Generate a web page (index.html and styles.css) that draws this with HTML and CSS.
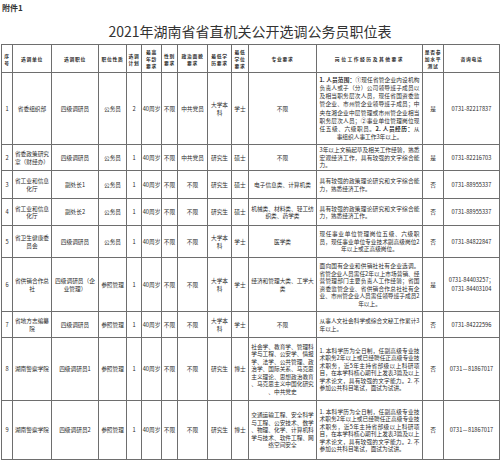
FILE: index.html
```html
<!DOCTYPE html>
<html lang="zh-CN">
<head>
<meta charset="utf-8">
<title>2021年湖南省省直机关公开选调公务员职位表</title>
<link rel="stylesheet" href="styles.css">
</head>
<body>
<div class="page">
  <div class="annex">附件1</div>
  <h1 class="title">2021年湖南省省直机关公开选调公务员职位表</h1>
  <div class="grid">
    <div class="hd">序<br>号</div>
    <div class="hd">选调单位</div>
    <div class="hd">选调职位</div>
    <div class="hd">职位性质</div>
    <div class="hd">选调<br>计划</div>
    <div class="hd">最高<br>年龄<br>要求</div>
    <div class="hd">性别<br>要求</div>
    <div class="hd">政治面貌<br>要求</div>
    <div class="hd">最低学<br>历要求</div>
    <div class="hd">最低<br>学位<br>要求</div>
    <div class="hd">专业要求</div>
    <div class="hd wide">岗位工作经历及其他要求</div>
    <div class="hd">是否参<br>加水平<br>测试</div>
    <div class="hd">咨询电话</div>

    <div>1</div><div>省委组织部</div><div>四级调研员</div><div>公务员</div><div>2</div><div class="nw">40周岁</div><div>不限</div><div>中共党员</div><div>大学本科</div><div>学士</div><div class="major">不限</div>
    <div class="req lines">
      <span class="ln"><b>1. 人员范围：</b>①现任省管企业内设机构</span>
      <span class="ln">负责人或子（分）公司领导班子成员以</span>
      <span class="ln">及相当职务层次人员，现任省国资委监</span>
      <span class="ln">管企业、市州管企业领导班子成员；中</span>
      <span class="ln">央在湘企业中层管理或市州管企业相当</span>
      <span class="ln">职务层次人员；②事业单位管理岗位现</span>
      <span class="ln">任五级、六级职员。<b>2. 人员经历：</b>从</span>
      <span class="ln last">事组织人事工作3年以上。</span>
    </div>
    <div>是</div><div>0731-82217837</div>

    <div>2</div><div>省委政策研究室（财经办）</div><div>四级调研员</div><div>公务员</div><div>1</div><div class="nw">40周岁</div><div>不限</div><div>中共党员</div><div>研究生</div><div>硕士</div><div class="major">不限</div>
    <div class="req"><p class="txt">3年以上文稿起草及相关工作经验，熟悉宏观经济工作，具有较强的文字综合能力。</p></div>
    <div>是</div><div>0731-82216703</div>

    <div>3</div><div>省工业和信息化厅</div><div>副处长1</div><div>公务员</div><div>1</div><div class="nw">40周岁</div><div>不限</div><div>不限</div><div>研究生</div><div>硕士</div><div class="major">电子信息类、计算机类</div>
    <div class="req"><p class="txt">具有较强的政策理论研究和文字综合能力，熟悉经济工作。</p></div>
    <div>否</div><div>0731-88955337</div>

    <div>4</div><div>省工业和信息化厅</div><div>副处长2</div><div>公务员</div><div>1</div><div class="nw">40周岁</div><div>不限</div><div>不限</div><div>研究生</div><div>硕士</div><div class="major">机械类、材料类、轻工纺织类、药学类</div>
    <div class="req"><p class="txt">具有较强的政策理论研究和文字综合能力，熟悉经济工作。</p></div>
    <div>否</div><div>0731-88955337</div>

    <div>5</div><div>省卫生健康委员会</div><div>四级调研员</div><div>公务员</div><div>1</div><div class="nw">40周岁</div><div>不限</div><div>不限</div><div>大学本科</div><div>学士</div><div class="major">医学类</div>
    <div class="req lc"><p class="txt">现任事业单位管理岗位五级、六级职员，现任事业单位专业技术副高级岗位2年以上或正高级岗位。</p></div>
    <div>否</div><div>0731-84822847</div>

    <div>6</div><div>省供销合作总社</div><div>四级调研员（企业管理）</div><div>参照管理</div><div>1</div><div class="nw">40周岁</div><div>不限</div><div>不限</div><div>大学本科</div><div>学士</div><div class="major">经济和管理大类、工学大类</div>
    <div class="req lc"><p class="txt">面向国有企业和供销社社有企业选调。省管企业人员需任2年以上市场营销、经营管理部门主要负责人工作经验；省国资委监管企业、省供销合作总社社有企业、市州管企业人员需任领导班子成员2年以上。</p></div>
    <div>是</div><div class="loose"><p class="txt">0731-84403257；<br>0731-84403104</p></div>

    <div>7</div><div>省地方志编纂院</div><div>四级调研员</div><div>参照管理</div><div>1</div><div class="nw">40周岁</div><div>不限</div><div>不限</div><div>大学本科</div><div>学士</div><div class="major">不限</div>
    <div class="req"><p class="txt">从事人文社会科学或综合文秘工作累计3年以上。</p></div>
    <div>否</div><div>0731-84222596</div>

    <div>8</div><div>湖南警察学院</div><div>四级调研员1</div><div>参照管理</div><div>1</div><div class="nw">40周岁</div><div>不限</div><div>不限</div><div>研究生</div><div>博士</div><div class="major any">社会学、教育学、管理科学与工程、公安学、情报学、法学、公共管理、政治学、国际关系、马克思主义理论、思想政治教育、马克思主义中国化研究、中共党史</div>
    <div class="req"><p class="txt">1. 本科学历为全日制，任副高级专业技术职务2年以上或已经聘任正高级专业技术职务，近5年主持省部级以上科研项目，在本学科核心期刊上发表3篇及以上学术论文，具有较强的文字能力。2. 不参加公共科目笔试，面试为试讲。</p></div>
    <div>否</div><div>0731－81867017</div>

    <div>9</div><div>湖南警察学院</div><div>四级调研员2</div><div>参照管理</div><div>1</div><div class="nw">40周岁</div><div>不限</div><div>不限</div><div>研究生</div><div>博士</div><div class="major any">交通运输工程、安全科学与工程、公安技术、数学、物理、化学、计算机科学与技术、软件工程、网络空间安全</div>
    <div class="req"><p class="txt">1. 本科学历为全日制，任副高级专业技术职务2年以上或已经聘任正高级专业技术职务，近5年主持省部级以上科研项目，在本学科核心期刊上发表3篇及以上学术论文，具有较强的文字能力。2. 不参加公共科目笔试，面试为试讲。</p></div>
    <div>否</div><div>0731－81867017</div>
  </div>
</div>
</body>
</html>
```
FILE: styles.css
```css
* { box-sizing: border-box; }
html, body { margin: 0; padding: 0; background: #fff; }
body {
  font-family: "Noto Sans CJK SC", "Noto Sans", sans-serif;
  color: #2b2b2b;
}
.page { width: 500px; height: 460px; overflow: hidden; }
.annex {
  height: 14px;
  padding: 3px 0 0 2px;
  font-size: 8px;
  line-height: 10px;
  font-weight: bold;
  color: #333;
}
.title {
  margin: 0;
  height: 30px;
  padding-top: 7px;
  text-align: center;
  font-size: 14px;
  line-height: 20px;
  font-weight: normal;
  color: #333;
}
.grid {
  display: grid;
  margin-left: 1px;
  width: 499px;
  padding: 1px;
  gap: 1px;
  background: #6e6e6e;
  grid-template-columns: 10px 38px 46px 27px 14px 19px 15px 29px 23px 16px 67px 105px 20px 55px;
  grid-template-rows: 27px 71px 25px 27px 26px 31px 53px 25px 62px 58px;
}
.grid > div {
  background: #fff;
  display: flex;
  flex-direction: column;
  justify-content: center;
  text-align: center;
  font-size: 5.7px;
  line-height: 7.5px;
  padding: 0 0.5px;
  overflow: hidden;
}
.txt { margin: 0; }
.grid > .hd {
  font-size: 4.8px;
  line-height: 7px;
  font-weight: bold;
  letter-spacing: 0.7px;
  white-space: nowrap;
}
.grid > .hd.wide { letter-spacing: 1.5px; }
.grid > .nw { white-space: nowrap; }
.grid > .major { padding: 0 1.5px; }
.grid > .any { line-break: anywhere; }
.grid > .req {
  padding: 0 2.5px;
  text-align: justify;
  text-align-last: left;
}
.grid > .req.lc { text-align-last: center; }
.grid > .loose { line-height: 8.3px; }
.grid > .lines { line-height: 8.2px; }
.ln {
  display: block;
  white-space: nowrap;
  text-align: justify;
  text-align-last: justify;
}
.ln.last { text-align-last: center; }
```
